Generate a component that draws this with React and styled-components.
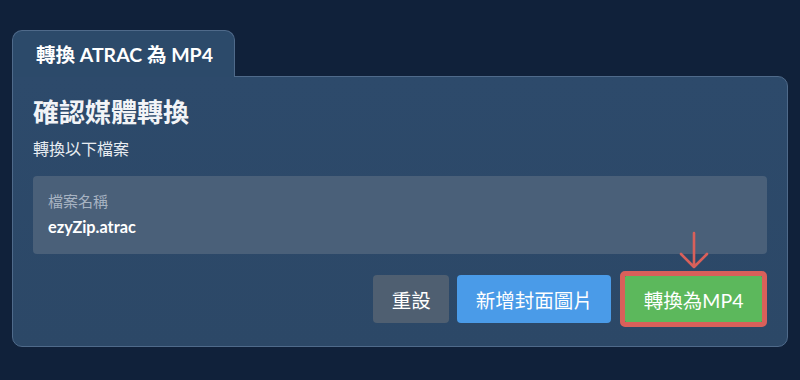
import React from "react";
import styled, { createGlobalStyle } from "styled-components";

const GlobalStyle = createGlobalStyle`
  html, body {
    margin: 0;
    padding: 0;
    background: #10213a;
  }
  body {
    font-family: Lato, "Noto Sans CJK TC", "Noto Sans", sans-serif;
    color: #fff;
  }
`;

const Page = styled.div`
  width: 800px;
  height: 380px;
  box-sizing: border-box;
  padding: 30px 12px 0 12px;
  background: #10213a;
`;

const Tab = styled.div`
  display: flex;
  align-items: center;
  width: 223px;
  height: 47px;
  box-sizing: border-box;
  padding: 0 0 2px 23px;
  background: #2c4a6a;
  border: 1px solid #4f6a8a;
  border-bottom: none;
  border-radius: 10px 10px 0 0;
  font-size: 19.5px;
  font-weight: 700;
  position: relative;
  z-index: 1;
  margin-bottom: -1px;
`;

const Panel = styled.div`
  width: 776px;
  box-sizing: border-box;
  padding: 20px 20px 19px 20px;
  background: linear-gradient(180deg, #2d4a6b 0%, #2c4867 100%);
  border: 1px solid #4f6a8a;
  border-radius: 0 10px 10px 10px;
`;

const Title = styled.h2`
  margin: 0;
  font-size: 26px;
  line-height: 30px;
  font-weight: 700;
  color: #f2f4f7;
`;

const Subtitle = styled.p`
  margin: 11px 0 0 0;
  font-size: 16px;
  line-height: 22px;
  color: #e8ecf1;
`;

const FileBox = styled.div`
  margin-top: 16px;
  height: 78px;
  box-sizing: border-box;
  padding: 15px 15px;
  background: #4a6079;
  border-radius: 4px;
  display: flex;
  flex-direction: column;
  gap: 5px;
`;

const Label = styled.span`
  font-size: 15px;
  line-height: 20px;
  color: #a7b3c2;
`;

const FileName = styled.span`
  font-size: 16.3px;
  line-height: 22px;
  font-weight: 700;
  color: #fff;
`;

const Actions = styled.div`
  display: flex;
  justify-content: flex-end;
  align-items: center;
  gap: 8px;
  margin-top: 17px;
`;

const colors = {
  reset: "#4f5f71",
  cover: "#4a9be8",
  convert: "#5cb85c",
};

const Button = styled.button`
  height: 48px;
  box-sizing: border-box;
  padding: 0 18.5px;
  border: none;
  border-radius: 4px;
  background: ${(p) => colors[p.$kind]};
  color: #fff;
  font-family: Lato, "Noto Sans CJK TC", sans-serif;
  font-size: 19.5px;
  cursor: pointer;
`;

const Highlight = styled.div`
  position: relative;
  border: 5px solid #d9605a;
  border-radius: 5px;
  display: flex;
  margin-left: 1px;

  ${Button} {
    height: 46px;
    border-radius: 1px;
  }
`;

const Arrow = styled.svg`
  position: absolute;
  left: 50%;
  top: -45px;
  transform: translateX(-50%);
`;

export default function App() {
  return (
    <>
      <GlobalStyle />
      <Page>
        <Tab>轉換 ATRAC 為 MP4</Tab>
        <Panel>
          <Title>確認媒體轉換</Title>
          <Subtitle>轉換以下檔案</Subtitle>
          <FileBox>
            <Label>檔案名稱</Label>
            <FileName>ezyZip.atrac</FileName>
          </FileBox>
          <Actions>
            <Button $kind="reset">重設</Button>
            <Button $kind="cover">新增封面圖片</Button>
            <Highlight>
              <Arrow width="32" height="40" viewBox="0 0 32 40">
                <path
                  d="M16 2 V36 M3 23 L16 36 L29 23"
                  fill="none"
                  stroke="#d9605a"
                  strokeWidth="2.6"
                  strokeLinecap="round"
                  strokeLinejoin="round"
                />
              </Arrow>
              <Button $kind="convert">轉換為MP4</Button>
            </Highlight>
          </Actions>
        </Panel>
      </Page>
    </>
  );
}
